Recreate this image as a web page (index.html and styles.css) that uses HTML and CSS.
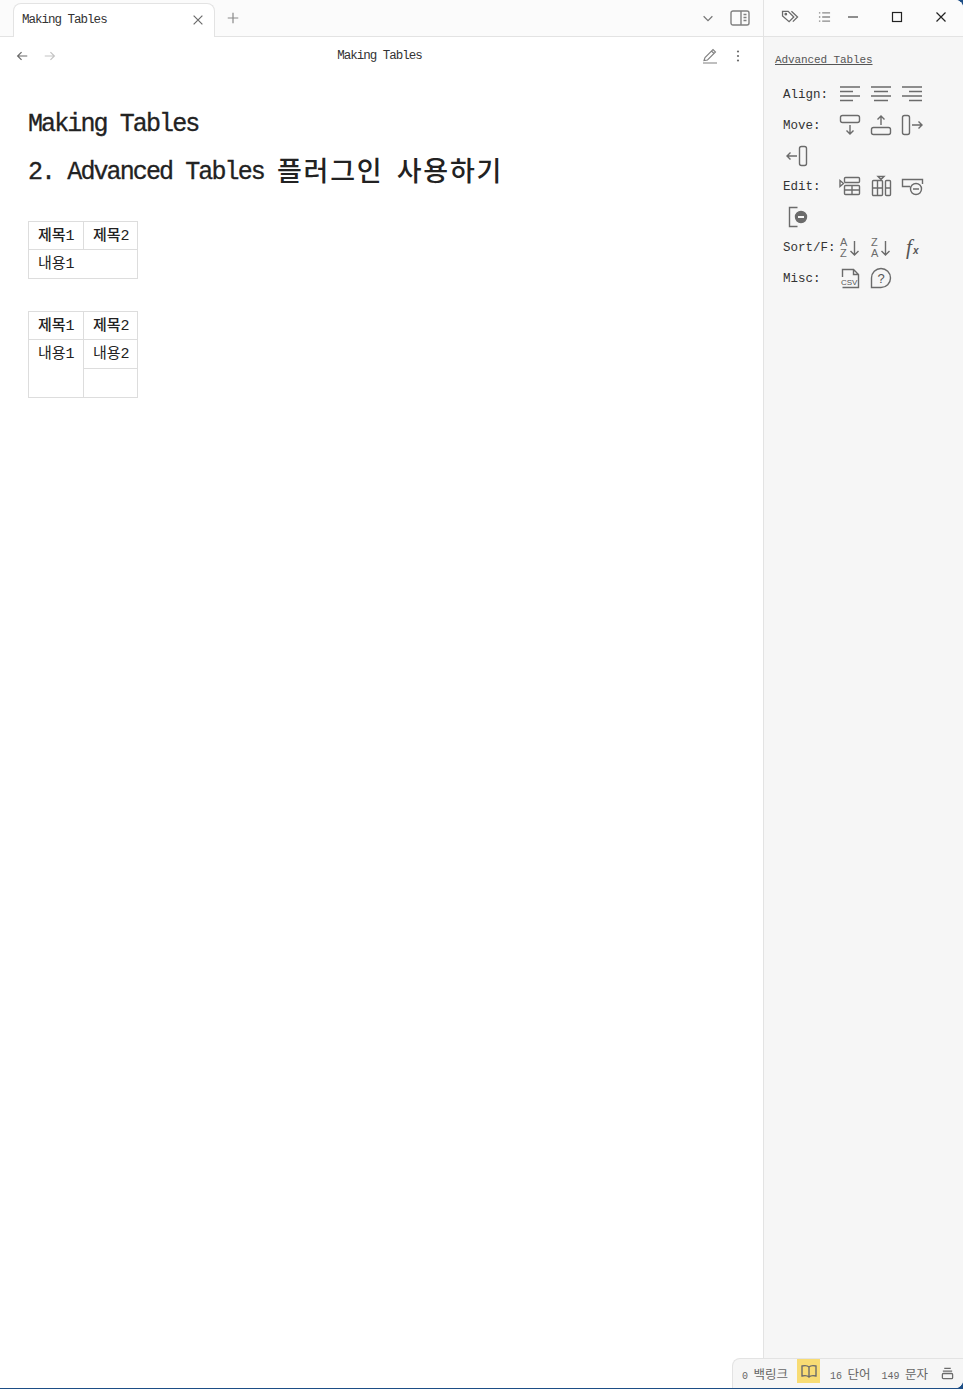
FILE: index.html
```html
<!DOCTYPE html>
<html lang="ko">
<head>
  <meta charset="UTF-8">
  <title>Making Tables</title>
  <link rel="stylesheet" href="styles.css">
</head>
<body>
  <div class="app">
    <main class="main">
      <div class="tab-bar">
        <div class="tab">
          <span class="tab-title">Making Tables</span>
          <svg class="icon-16" viewBox="0 0 16 16"><path d="M3 3l10 10M13 3L3 13"/></svg>
        </div>
        <svg class="tab-new" viewBox="0 0 16 16"><path d="M8 2v12M2 8h12"/></svg>
        <div class="tab-tools">
          <svg class="icon-16 chevron" viewBox="0 0 16 16"><path d="M3 6l5 5 5-5"/></svg>
          <svg class="toggle" viewBox="0 0 20 16"><rect x="1" y="1" width="18" height="14" rx="2"/><path d="M11 1v14M13.500 4.500h3M13.500 7.500h3M13.500 10.500h3"/></svg>
        </div>
      </div>

      <div class="view-bar">
        <div class="nav">
          <svg class="icon-16" viewBox="0 0 16 16"><path d="M14 8H3M7.500 3.500L3 8l4.500 4.500"/></svg>
          <svg class="icon-16 muted" viewBox="0 0 16 16"><path d="M2 8h11M8.500 3.500L13 8l-4.500 4.500"/></svg>
        </div>
        <div class="view-title">Making Tables</div>
        <div class="view-actions">
          <svg class="icon-16" viewBox="0 0 16 16"><path d="M2 12.500L3 9.500 11 1.500l2.500 2.500-8 8zM9.500 3l2.500 2.500M1 15h14"/></svg>
          <svg class="dots" viewBox="0 0 4 12"><circle cx="2" cy="1.500" r="1.100"/><circle cx="2" cy="6" r="1.100"/><circle cx="2" cy="10.500" r="1.100"/></svg>
        </div>
      </div>

      <article class="note">
        <h1>Making Tables</h1>
        <h2>2. Advanced Tables <span class="ko">플러그인</span> <span class="ko">사용하기</span></h2>
        <table>
          <tr><th>제목1</th><th>제목2</th></tr>
          <tr><td colspan="2">내용1</td></tr>
        </table>
        <table>
          <tr><th>제목1</th><th>제목2</th></tr>
          <tr><td rowspan="2">내용1</td><td>내용2</td></tr>
          <tr><td>&nbsp;</td></tr>
        </table>
      </article>
    </main>

    <aside class="side">
      <div class="side-bar">
        <svg class="side-tag" viewBox="0 0 20 16"><path d="M1.500 2.500h6l6 6-5 5-7-6zM11 2.500l6.500 6-5 5"/><circle cx="5" cy="5.500" r=".8"/></svg>
        <svg class="side-list" viewBox="0 0 14 12"><path d="M4.500 1.500H13M4.500 6H13M4.500 10.500H13M1 1.500h1.500M1 6h1.500M1 10.500h1.500"/></svg>
        <svg class="win-min" viewBox="0 0 12 12"><path d="M1 6h10"/></svg>
        <svg class="win-max" viewBox="0 0 12 12"><rect x="1.500" y="1.500" width="9" height="9"/></svg>
        <svg class="win-close" viewBox="0 0 12 12"><path d="M1.500 1.500l9 9M10.500 1.500l-9 9"/></svg>
      </div>

      <div class="side-body">
        <a class="side-link">Advanced Tables</a>
        <div class="toolbar">
          <div class="tool-row">
            <span class="tool-label">Align:</span>
            <span class="tool"><svg viewBox="0 0 24 24"><path d="M2 5h20M2 9.500h13M2 14h20M2 18.500h13"/></svg></span>
            <span class="tool"><svg viewBox="0 0 24 24"><path d="M2 5h20M5 9.500h14M2 14h20M5 18.500h14"/></svg></span>
            <span class="tool"><svg viewBox="0 0 24 24"><path d="M2 5h20M9 9.500h13M2 14h20M9 18.500h13"/></svg></span>
          </div>
          <div class="tool-row">
            <span class="tool-label">Move:</span>
            <span class="tool"><svg viewBox="0 0 24 24"><rect x="2.500" y="2.500" width="19" height="7" rx="2"/><path d="M12 12v9M8.500 17.500L12 21l3.500-3.500"/></svg></span>
            <span class="tool"><svg viewBox="0 0 24 24"><rect x="2.500" y="14.500" width="19" height="7" rx="2"/><path d="M12 12V3M8.500 6.500L12 3l3.500 3.500"/></svg></span>
            <span class="tool"><svg viewBox="0 0 24 24"><rect x="2.500" y="2.500" width="7" height="19" rx="2"/><path d="M12 12h10M18.500 8.500L22 12l-3.500 3.500"/></svg></span>
            <span class="tool"><svg viewBox="0 0 24 24"><rect x="14.500" y="2.500" width="7" height="19" rx="2"/><path d="M12 12H2M5.500 8.500L2 12l3.500 3.500"/></svg></span>
          </div>
          <div class="tool-row">
            <span class="tool-label">Edit:</span>
            <span class="tool"><svg viewBox="0 0 24 24"><path d="M2 6.500l3.500 3L2 12.500z"/><rect x="6.500" y="3.500" width="15" height="5" rx="1"/><rect x="6.500" y="11.500" width="15" height="9" rx="1"/><path d="M6.500 16h15M14 11.500v9"/></svg></span>
            <span class="tool"><svg viewBox="0 0 24 24"><path d="M9 2.500h6l-3 3z"/><rect x="3.500" y="6.500" width="10" height="15" rx="1"/><path d="M8.500 6.500v15M3.500 14h10"/><rect x="16.500" y="6.500" width="5" height="15" rx="1"/><path d="M16.500 14h5"/></svg></span>
            <span class="tool"><svg viewBox="0 0 24 24"><path d="M10 12.500H2.500v-7h20V10"/><circle cx="16" cy="15" r="5.500"/><path d="M13 15h6"/></svg></span>
            <span class="tool"><svg viewBox="0 0 24 24"><path d="M12.500 2.500h-8v19h8"/><circle class="solid" cx="16" cy="12" r="5.500"/><path class="cut" d="M13 12h6"/></svg></span>
          </div>
          <div class="tool-row">
            <span class="tool-label">Sort/F:</span>
            <span class="tool"><svg viewBox="0 0 24 24"><text class="glyph" x="2" y="10">A</text><text class="glyph" x="2" y="21">Z</text><path d="M16.500 5v14M12.500 15l4 4 4-4"/></svg></span>
            <span class="tool"><svg viewBox="0 0 24 24"><text class="glyph" x="2" y="10">Z</text><text class="glyph" x="2" y="21">A</text><path d="M16.500 5v14M12.500 15l4 4 4-4"/></svg></span>
            <span class="tool"><svg viewBox="0 0 24 24"><text class="fx-f" x="6" y="18">f</text><text class="fx-x" x="13" y="18">x</text></svg></span>
          </div>
          <div class="tool-row">
            <span class="tool-label">Misc:</span>
            <span class="tool"><svg viewBox="0 0 24 24"><path d="M4.500 11V3.500h11l5 5V21.500H4.500M15.500 3.500v5h5"/><text class="csv" x="3" y="19">CSV</text></svg></span>
            <span class="tool"><svg viewBox="0 0 24 24"><path d="M2.500 21.500V12a9.500 9.500 0 1 1 9.500 9.500z"/><text class="help" x="8.500" y="17">?</text></svg></span>
          </div>
        </div>
      </div>
    </aside>

    <footer class="status">
      <span class="count"><b>0</b> 백링크</span>
      <span class="reading">
        <svg viewBox="0 0 16 14"><path d="M8 3C6.500 1.500 3.500 1.500 1 2v10c2.500-.5 5.500-.5 7 1 1.500-1.500 4.500-1.500 7-1V2C12.500 1.500 9.500 1.500 8 3zM8 3v10"/></svg>
      </span>
      <span class="count"><b>16</b> 단어</span>
      <span class="count"><b>149</b> 문자</span>
      <svg class="sync" viewBox="0 0 14 14"><path d="M3.500 1.500h7M2 4.500h10"/><rect x="1.500" y="7" width="11" height="5.500" rx="1"/></svg>
    </footer>
  </div>
</body>
</html>
```

FILE: styles.css
```css
* {
  margin: 0;
  padding: 0;
  box-sizing: border-box;
}
body {
  width: 963px;
  height: 1389px;
  overflow: hidden;
  background: #1d4e86;
  font-family: "Liberation Mono", "Noto Sans CJK KR", monospace;
  color: #222222;
}
svg {
  display: block;
  fill: none;
  stroke: #6b6b6b;
  stroke-width: 1.4;
}
.app {
  position: relative;
  display: flex;
  width: 963px;
  height: 1388px;
  background: #ffffff;
  border-radius: 0 8px 8px 0;
  overflow: hidden;
}

/* left pane */
.main {
  width: 764px;
  flex: none;
  border-right: 1px solid #e3e3e3;
}
.tab-bar {
  display: flex;
  align-items: flex-end;
  height: 37px;
  padding-left: 13px;
  background: #fbfbfb;
  border-bottom: 1px solid #e3e3e3;
}
.tab {
  display: flex;
  align-items: center;
  justify-content: space-between;
  width: 202px;
  height: 34px;
  margin-bottom: -1px;
  padding: 0 9px 2px 8px;
  background: #ffffff;
  border: 1px solid #e3e3e3;
  border-bottom: 0;
  border-radius: 8px 8px 0 0;
}
.tab-title {
  font-size: 12.500px;
  letter-spacing: -.99px;
  color: #333333;
}
.icon-16 {
  width: 14px;
  height: 14px;
  flex: none;
}
.tab-new {
  width: 14px;
  height: 14px;
  margin: 0 0 11px 11px;
  stroke: #8a8a8a;
}
.tab-tools {
  display: flex;
  align-items: center;
  gap: 15px;
  margin: 0 13px 10px auto;
}
.toggle {
  width: 20px;
  height: 16px;
  stroke: #808080;
}
.chevron {
  stroke: #777777;
}

.view-bar {
  position: relative;
  display: flex;
  align-items: center;
  justify-content: space-between;
  height: 37px;
  padding: 1px 23px 0 15px;
}
.nav {
  display: flex;
  gap: 14px;
}
.nav .muted {
  stroke: #c4c4c4;
}
.view-title {
  font-size: 12.500px;
  letter-spacing: -.99px;
  color: #333333;
}
.view-actions {
  display: flex;
  align-items: center;
  gap: 18px;
}
.view-actions .icon-16 {
  width: 16px;
  height: 16px;
  stroke-width: 1.1;
  stroke: #808080;
}
.dots {
  width: 4px;
  height: 12px;
  fill: #6b6b6b;
  stroke: none;
}

.note {
  padding: 0 28px;
}
h1, h2 {
  font-size: 25px;
  font-weight: normal;
  letter-spacing: -1.900px;
  line-height: 32px;
  color: #222222;
  -webkit-text-stroke: .3px #222222;
}
h1 {
  margin-top: 35px;
}
h2 {
  margin-top: 16px;
  margin-bottom: 31px;
}
.ko {
  font-size: 27px;
  font-weight: 500;
  letter-spacing: 1.800px;
  vertical-align: -2px;
  -webkit-text-stroke: 0;
}
table {
  border-collapse: collapse;
  margin-bottom: 32px;
  font-size: 15px;
}
th, td {
  height: 29px;
  padding: 2px 4px 0 9px;
  border: 1px solid #dddddd;
  text-align: left;
  font-weight: normal;
  vertical-align: top;
  line-height: 26px;
  white-space: nowrap;
}
th {
  height: 28px;
  width: 55px;
  font-weight: 500;
  line-height: 25px;
}
th + th {
  width: 54px;
}

/* right pane */
.side {
  flex: 1;
  background: #f6f6f6;
}
.side-bar {
  display: flex;
  align-items: center;
  height: 37px;
  padding: 0 16px 3px 17px;
  background: #fbfbfb;
  border-bottom: 1px solid #e3e3e3;
}
.side-tag {
  width: 19px;
  height: 15px;
}
.side-list {
  width: 13px;
  height: 12px;
  margin-left: 18px;
  stroke: #8a8a8a;
}
.win-min, .win-max, .win-close {
  width: 12px;
  height: 12px;
  stroke: #222222;
  stroke-width: 1.200;
}
.win-min {
  margin-left: 16px;
}
.win-max {
  margin-left: 32px;
}
.win-close {
  margin-left: 32px;
}
.side-body {
  padding: 16px 0 0 11px;
}
.side-link {
  display: block;
  font-size: 11px;
  letter-spacing: -.1px;
  line-height: 14px;
  color: #555555;
  text-decoration: underline;
}
.toolbar {
  width: 170px;
  margin: 12px 0 0 6.500px;
}
.tool-row {
  display: flex;
  flex-wrap: wrap;
}
.tool-label {
  width: 52.500px;
  height: 30.670px;
  padding-left: 1.500px;
  font-size: 12.500px;
  line-height: 33px;
  color: #333333;
}
.tool {
  display: flex;
  align-items: center;
  justify-content: center;
  width: 31.330px;
  height: 30.670px;
}
.tool svg {
  width: 24px;
  height: 24px;
}
.glyph {
  font-family: "Liberation Sans", sans-serif;
  font-size: 11px;
  fill: #6b6b6b;
  stroke: none;
}
.fx-f {
  font-family: "Liberation Serif", serif;
  font-style: italic;
  font-size: 21px;
  fill: #555555;
  stroke: none;
}
.fx-x {
  font-family: "Liberation Sans", sans-serif;
  font-weight: bold;
  font-style: italic;
  font-size: 10px;
  fill: #555555;
  stroke: none;
}
.csv {
  font-family: "Liberation Sans", sans-serif;
  font-size: 8px;
  fill: #555555;
  stroke: none;
}
.help {
  font-family: "Liberation Sans", sans-serif;
  font-size: 13px;
  fill: #555555;
  stroke: none;
}
.solid {
  fill: #6b6b6b;
}
.cut {
  stroke: #f6f6f6;
  stroke-width: 2;
}

/* status bar over the right pane */
.status {
  position: absolute;
  right: 0;
  bottom: 0;
  display: flex;
  align-items: center;
  width: 231px;
  height: 30px;
  padding: 0 9px;
  background: #f6f6f6;
  border: 1px solid #e3e3e3;
  border-width: 1px 0 0 1px;
  border-radius: 8px 0 0 0;
  font-size: 12.500px;
  color: #666666;
}
.count {
  word-spacing: -2px;
  white-space: nowrap;
}
.count b {
  font-weight: normal;
  font-size: 10px;
}
.reading {
  display: flex;
  align-items: center;
  justify-content: center;
  width: 23px;
  height: 24px;
  margin: 0 10px 5px 9px;
  align-self: flex-end;
  background: #f8dc74;
}
.reading svg {
  width: 16px;
  height: 14px;
}
.count + .count {
  margin-left: 11px;
}
.sync {
  width: 13px;
  height: 13px;
  margin-left: auto;
}
```
